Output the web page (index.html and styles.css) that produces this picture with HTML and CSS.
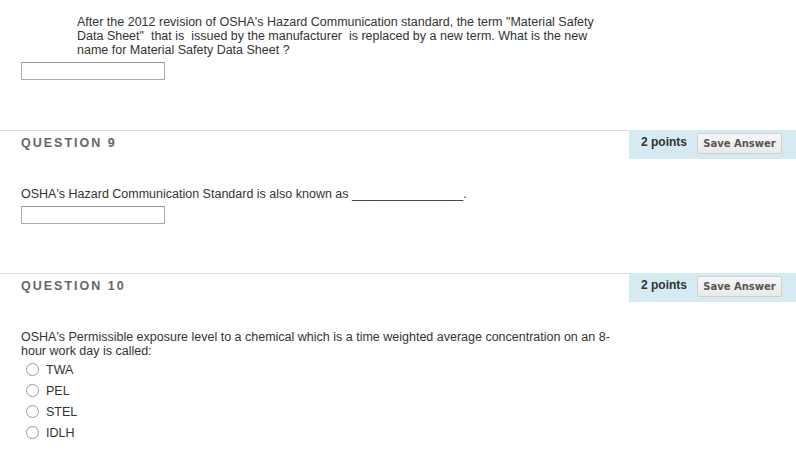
FILE: index.html
```html
<!DOCTYPE html>
<html>
<head>
<meta charset="utf-8">
<link rel="stylesheet" href="styles.css">
</head>
<body>
<div class="page">
  <section class="q q-first">
    <div class="q-body">
      <p class="text indent">After the 2012 revision of OSHA's Hazard Communication standard, the term "Material Safety Data Sheet"&nbsp; that is&nbsp; issued by the manufacturer&nbsp; is replaced by a new term. What is the new name for Material Safety Data Sheet ?</p>
      <input class="answer" type="text">
    </div>
  </section>

  <section class="q">
    <div class="q-head">
      <h3 class="q-title">QUESTION 9</h3>
      <div class="q-points">
        <span class="pts">2 points</span>
        <button class="save">Save Answer</button>
      </div>
    </div>
    <div class="q-body">
      <p class="text">OSHA's Hazard Communication Standard is also known as ________________.</p>
      <input class="answer" type="text">
    </div>
  </section>

  <section class="q">
    <div class="q-head">
      <h3 class="q-title">QUESTION 10</h3>
      <div class="q-points">
        <span class="pts">2 points</span>
        <button class="save">Save Answer</button>
      </div>
    </div>
    <div class="q-body">
      <p class="text">OSHA's Permissible exposure level to a chemical which is a time weighted average concentration on an 8-hour work day is called:</p>
      <ul class="choices">
        <li class="choice"><span class="radio"></span><span>TWA</span></li>
        <li class="choice"><span class="radio"></span><span>PEL</span></li>
        <li class="choice"><span class="radio"></span><span>STEL</span></li>
        <li class="choice"><span class="radio"></span><span>IDLH</span></li>
      </ul>
    </div>
  </section>
</div>
</body>
</html>
```

FILE: styles.css
```css
* { box-sizing: border-box; }
html, body { margin: 0; padding: 0; background: #fff; }
body {
  font-family: "Liberation Sans", Arial, sans-serif;
  font-size: 12.5px;
  color: #333;
}
.page { width: 796px; }

.q-head {
  display: flex;
  height: 29px;
}
.q-title {
  flex: 1;
  margin: 0;
  border-top: 1px solid #dcdcdc;
  padding: 5px 0 0 21px;
  font-size: 12.5px;
  font-weight: bold;
  letter-spacing: 2px;
  color: #666;
  line-height: 14px;
}
.q-points {
  width: 167px;
  background: #d6eaf1;
  display: flex;
  align-items: flex-start;
  padding: 3px 0 0 12px;
  gap: 10px;
}
.pts {
  font-weight: bold;
  font-size: 12px;
  color: #333;
  padding-top: 2px;
}
.save {
  width: 85px;
  height: 21px;
  margin: 0;
  padding: 0;
  border: 1px solid #d0d0d0;
  border-radius: 2px;
  background: linear-gradient(#f7f7f7, #e9e9e9);
  font-family: "DejaVu Sans", Verdana, sans-serif;
  font-weight: bold;
  font-size: 10px;
  color: #555;
}

.q-body {
  padding: 28px 0 0 21px;
  height: 114px;
}
.q-first .q-body { height: 130px; padding-top: 15px; }
.q:last-child .q-body { height: auto; }

.text {
  margin: 0;
  width: 600px;
  line-height: 14px;
}
.text.indent { margin-left: 56px; width: 525px; }

.answer {
  display: block;
  margin: 5px 0 0 0;
  width: 144px;
  height: 18px;
  border: 1px solid #aaa;
  border-top-color: #999;
  padding: 0;
  background: #fff;
}

.choices {
  list-style: none;
  margin: 1px 0 0 0;
  padding: 0 0 0 5px;
}
.choice {
  display: flex;
  align-items: center;
  height: 21px;
  gap: 7px;
}
.radio {
  width: 13px;
  height: 13px;
  border: 1px solid #9a9a9a;
  border-radius: 50%;
  background: #fff;
}
```
